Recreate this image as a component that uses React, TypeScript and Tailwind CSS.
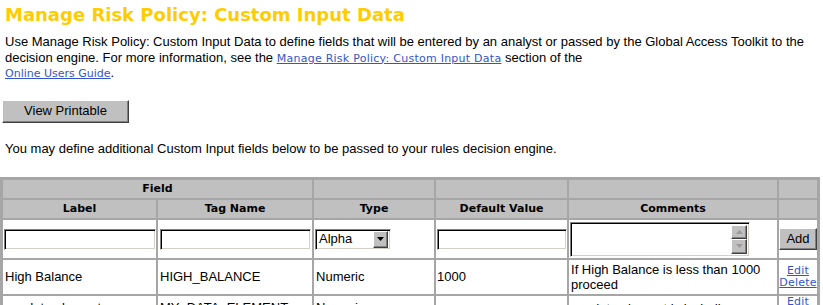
import React from 'react';

const raised =
  'bg-[#c0c0c0] border border-t-white border-l-white border-r-[#404040] border-b-[#404040] shadow-[inset_-1px_-1px_0_#808080]';
const inset =
  'bg-white border border-t-[#808080] border-l-[#808080] border-r-white border-b-white shadow-[inset_1px_1px_0_#000,inset_-1px_-1px_0_#d4d0c8]';

const Arrow = ({ up, color }: { up?: boolean; color: string }) => (
  <svg width="7" height="4" viewBox="0 0 7 4">
    <path d={up ? 'M3.5 0 L7 4 L0 4 Z' : 'M0 0 L7 0 L3.5 4 Z'} fill={color} />
  </svg>
);

type TRow = {
  label: string;
  tag: string;
  type: string;
  value: string;
  comments: string;
};

const rows: TRow[] = [
  { label: 'High Balance', tag: 'HIGH_BALANCE', type: 'Numeric', value: '1000', comments: 'If High Balance is less than 1000 proceed' },
  { label: 'my data element', tag: 'MY_DATA_ELEMENT', type: 'Numeric', value: '', comments: 'my data element is including' },
];

export default function App() {
  return (
    <div className="w-[823px] h-[305px] overflow-hidden bg-white text-black font-['Liberation_Sans',Arial,sans-serif] text-[13px]">
      {/* Title */}
      <h1 className="mt-[4px] pl-[5px] h-[22px] leading-[22px] text-[18px] font-bold text-[#ffcc00] font-['DejaVu_Sans',Verdana,sans-serif]">
        Manage Risk Policy: Custom Input Data
      </h1>

      {/* Intro */}
      <p className="mt-[8px] pl-[5px] pr-[4px] leading-[15.5px]">
        Use Manage Risk Policy: Custom Input Data to define fields that will be entered by an analyst or passed by the
        Global Access Toolkit to the decision engine. For more information, see the{' '}
        <a href="#" className="text-[11px] leading-[13px] tracking-[0.25px] text-[#3355cc] underline font-['DejaVu_Sans',Verdana,sans-serif]">
          Manage Risk Policy: Custom Input Data
        </a>{' '}
        section of the
        <br />
        <a href="#" className="text-[11px] leading-[13px] text-[#3355cc] underline font-['DejaVu_Sans',Verdana,sans-serif]">
          Online Users Guide
        </a>
        .
      </p>

      <button className={`${raised} ml-[2px] mt-[19px] w-[127px] h-[23px] flex items-center justify-center text-[13px]`}>
        View Printable
      </button>

      <p className="mt-[18px] pl-[5px] leading-[15.5px]">
        You may define additional Custom Input fields below to be passed to your rules decision engine.
      </p>

      {/* Custom input table */}
      <table className="mt-[21px] w-[820px] table-fixed border-separate border-spacing-[2px] bg-[#a6a6a6] border border-[#a6a6a6]">
        <colgroup>
          <col className="w-[153px]" />
          <col className="w-[154px]" />
          <col className="w-[120px]" />
          <col className="w-[131px]" />
          <col className="w-[208px]" />
          <col className="w-[38px]" />
        </colgroup>
        <thead className="font-['DejaVu_Sans',Verdana,sans-serif] text-[11px] font-bold text-black">
          <tr className="h-[18px]">
            <th colSpan={2} className="p-0 bg-[#c0c0c0] text-center">Field</th>
            <th className="p-0 bg-[#c0c0c0]" />
            <th className="p-0 bg-[#c0c0c0]" />
            <th className="p-0 bg-[#c0c0c0]" />
            <th className="p-0 bg-[#c0c0c0]" />
          </tr>
          <tr className="h-[18px]">
            <th className="p-0 bg-[#c0c0c0] text-center">Label</th>
            <th className="p-0 bg-[#c0c0c0] text-center">Tag Name</th>
            <th className="p-0 bg-[#c0c0c0] text-center">Type</th>
            <th className="p-0 bg-[#c0c0c0] text-center">Default Value</th>
            <th className="p-0 bg-[#c0c0c0] text-center">Comments</th>
            <th className="p-0 bg-[#c0c0c0]" />
          </tr>
        </thead>
        <tbody>
          {/* New field inputs */}
          <tr className="h-[38px]">
            <td className="p-0 bg-white align-middle">
              <input className={`${inset} block ml-[1px] w-[152px] h-[21px] outline-none`} />
            </td>
            <td className="p-0 bg-white align-middle">
              <input className={`${inset} block ml-[2px] w-[151px] h-[21px] outline-none`} />
            </td>
            <td className="p-0 bg-white align-middle">
              <div className={`${inset} ml-[1px] w-[76px] h-[21px] flex items-center justify-between pl-[3px] pr-[2px]`}>
                <span>Alpha</span>
                <span className={`${raised} w-[15px] h-[17px] flex items-center justify-center`}>
                  <Arrow color="#000" />
                </span>
              </div>
            </td>
            <td className="p-0 bg-white align-middle">
              <input className={`${inset} block ml-[1px] w-[130px] h-[21px] outline-none`} />
            </td>
            <td className="p-0 bg-white align-middle">
              <div className={`${inset} ml-[1px] w-[180px] h-[35px] flex justify-end p-[2px]`}>
                <div className="flex flex-col justify-between w-[16px]">
                  <span className={`${raised} h-[15px] flex items-center justify-center`}>
                    <Arrow up color="#9a9a9a" />
                  </span>
                  <span className={`${raised} h-[15px] flex items-center justify-center`}>
                    <Arrow color="#9a9a9a" />
                  </span>
                </div>
              </div>
            </td>
            <td className="p-0 bg-white align-middle">
              <button className={`${raised} w-[38px] h-[22px] flex items-center justify-center text-[13px]`}>Add</button>
            </td>
          </tr>

          {/* Existing fields */}
          {rows.map((row) => (
            <tr key={row.tag}>
              <td className="p-0 py-[2px] pl-[2px] bg-white align-middle">{row.label}</td>
              <td className="p-0 py-[2px] pl-[2px] bg-white align-middle">{row.tag}</td>
              <td className="p-0 py-[2px] pl-[2px] bg-white align-middle">{row.type}</td>
              <td className="p-0 py-[2px] pl-[1px] bg-white align-middle">{row.value}</td>
              <td className="p-0 py-[2px] pl-[2px] bg-white align-middle leading-[15px]">{row.comments}</td>
              <td className="p-0 bg-white align-middle text-center font-['DejaVu_Sans',Verdana,sans-serif] text-[11px] leading-[12px] tracking-[0.2px]">
                <a href="#" className="block text-[#3355cc] underline">Edit</a>
                <a href="#" className="block text-[#3355cc] underline">Delete</a>
              </td>
            </tr>
          ))}
        </tbody>
      </table>
    </div>
  );
}
